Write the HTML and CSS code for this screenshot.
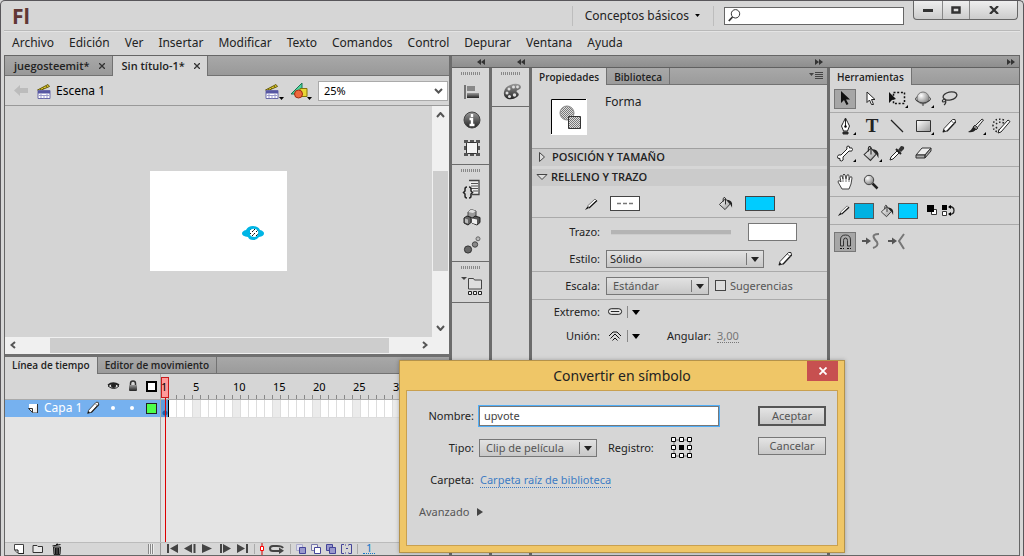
FILE: index.html
```html
<!DOCTYPE html>
<html lang="es">
<head>
<meta charset="utf-8">
<title>Fl</title>
<link rel="stylesheet" href="styles.css">
</head>
<body>
<svg class="defs" width="0" height="0" aria-hidden="true">
  <defs>
    <linearGradient id="gLight" x1="0" y1="0" x2="1" y2="1"><stop offset="0" stop-color="#fff"/><stop offset="1" stop-color="#999"/></linearGradient>
    <linearGradient id="gDark" x1="0" y1="0" x2="0" y2="1"><stop offset="0" stop-color="#999"/><stop offset="1" stop-color="#222"/></linearGradient>
    <radialGradient id="gBall" cx=".35" cy=".3" r=".8"><stop offset="0" stop-color="#fff"/><stop offset="1" stop-color="#777"/></radialGradient>
    <pattern id="dots" width="2" height="2" patternUnits="userSpaceOnUse"><rect width="2" height="2" fill="#ddd"/><rect width="1" height="1" fill="#777"/><rect x="1" y="1" width="1" height="1" fill="#777"/></pattern>
    <pattern id="dotsBlack" width="4" height="4" patternUnits="userSpaceOnUse"><rect width="4" height="4" fill="#fff"/><rect width="1" height="1" fill="#111"/><rect x="2" y="2" width="1" height="1" fill="#111"/><rect x="3" y="1" width="1" height="1" fill="#555"/></pattern>
    <symbol id="pencil" viewBox="0 0 16 16"><path d="M2 14 3 10.5 11.5 1.5 14 1.5 14.5 4 6 13z" fill="#fff" stroke="#333"/><path d="M1.500 14.500 3 11.500 4.500 13z" fill="#111"/><path d="M6 13.300 14.600 4" stroke="#222" stroke-width="1.300"/><path d="m10.500 3 3 3" stroke="#666"/></symbol>
    <symbol id="brushpen" viewBox="0 0 14 14"><path d="M3.500 9 11 2l1.500 1.500L5.500 10.500z" fill="#fff" stroke="#777"/><path d="M5 11 13 3.500" stroke="#111" stroke-width="1.200"/><path d="M1 13 3.500 9.500 5 11z" fill="#111"/></symbol>
    <symbol id="bucket" viewBox="0 0 16 16"><path d="M1.500 9 8 3l5 5.500-5.500 6z" fill="url(#gLight)" stroke="#333"/><path d="M8 9V2.500Q6.500 0 5.500 3v3" fill="none" stroke="#222"/><path d="M9 4q5 0 6 4v4.500l-2-4z" fill="#222"/></symbol>
    <symbol id="clap" viewBox="0 0 16 18"><path d="M1.500 8 12 2.500l1.500 2L3 9z" fill="#e4cf28" stroke="#665b10"/><path d="M4 7 5 8.500M7 5.500l1 1.500M10 4l1 1.500" stroke="#665b10"/><path d="M2 8.500h12v8H2z" fill="#fff" stroke="#6868a8"/><path d="M2 9h12v2.500H2z" fill="#5757a3"/><path d="M3 13.500h10M5 12v4M8 13.500v3M11 12v4" stroke="#9b9bcc"/></symbol>
    <symbol id="corner" viewBox="0 0 4 4"><path d="M4 0v4H0z"/></symbol>
    <symbol id="down" viewBox="0 0 8 5"><path d="M0 0h8L4 5z"/></symbol>
    <symbol id="chevs" viewBox="0 0 8 6"><path d="M4 0v6L0 3zM8 0v6L4 3z"/></symbol>
  </defs>
</svg>

<div class="app">
  <header class="titlebar">
    <div class="logo">Fl</div>
    <button class="workspace-switch">Conceptos básicos <svg width="5" height="3"><use href="#down"/></svg></button>
    <label class="search">
      <svg width="13" height="13" viewBox="0 0 13 13" fill="none" stroke="#333" aria-label="Buscar"><circle cx="7.500" cy="4.800" r="4.200"/><path d="M4.500 8 .8 12" stroke-width="1.800"/></svg>
      <input type="text" aria-label="Buscar">
    </label>
    <div class="window-buttons">
      <button aria-label="Minimizar"><svg width="10" height="3"><path d="M0 0h10v3H0z" fill="#333"/></svg></button>
      <button aria-label="Maximizar"><svg width="10" height="8"><path d="M1.500 1.500h7v5h-7z" fill="none" stroke="#333" stroke-width="2.500"/></svg></button>
      <button aria-label="Cerrar"><svg width="10" height="8" viewBox="0 0 10 8"><path d="m1 0 8 8M9 0 1 8" stroke="#333" stroke-width="2.200"/></svg></button>
    </div>
  </header>

  <nav class="menubar">
    <button>Archivo</button><button>Edición</button><button>Ver</button><button>Insertar</button><button>Modificar</button><button>Texto</button><button>Comandos</button><button>Control</button><button>Depurar</button><button>Ventana</button><button>Ayuda</button>
  </nav>

  <main class="workspace">
    <div class="documents">
      <section class="document">
        <div class="doc-tabs">
          <div class="doc-tab">juegosteemit* <button aria-label="Cerrar juegosteemit"><svg width="6" height="6" viewBox="0 0 6 6"><path d="m0 0 6 6M6 0 0 6" stroke="#333" stroke-width="1.300"/></svg></button></div>
          <div class="doc-tab active">Sin título-1* <button aria-label="Cerrar Sin título-1"><svg width="6" height="6" viewBox="0 0 6 6"><path d="m0 0 6 6M6 0 0 6" stroke="#333" stroke-width="1.300"/></svg></button></div>
        </div>
        <div class="scenebar">
          <button class="back" aria-label="Atrás"><svg width="14" height="11"><path d="M0 5.500 6 0v3h8v5H6v3z" fill="#bcbcbc"/></svg></button>
          <svg width="16" height="18"><use href="#clap"/></svg>
          <span class="scene-name">Escena 1</span>
          <button class="scene-btn" aria-label="Editar escena"><svg width="20" height="18" viewBox="0 0 20 18"><use href="#clap" width="16" height="18"/><path d="M15 15h5l-2.500 3z"/></svg></button>
          <button class="scene-btn" aria-label="Editar símbolos"><svg width="22" height="18" viewBox="0 0 22 18"><path d="M1 12 12 1v11z" fill="#4dd3a0" stroke="#187451"/><path d="M10 6.500h7v8h-7z" fill="#e9d735" stroke="#84750c"/><circle cx="8.500" cy="12" r="4" fill="#ee693d" stroke="#9c2f12"/><path d="M17 15h5l-2.500 3z"/></svg></button>
          <span class="zoom-select"><select aria-label="Zoom"><option>25%</option></select><svg width="9" height="6" viewBox="0 0 9 6"><path d="m1 1 3.500 3.500L8 1" fill="none" stroke="#555" stroke-width="2"/></svg></span>
        </div>
        <div class="canvas-area">
          <div class="pasteboard">
            <div class="stage">
              <svg class="shape" width="22" height="16" viewBox="0 0 22 16"><path d="M4 5Q6 1 11 1t7 4q4 1 4 3.500T17 12q-2 3-6 3t-5-3Q0 11 0 8.500T4 5z" fill="#00b5e5"/><path d="M8 5q5-3 8 1 1 5-3 6-5 0-5-3z" fill="url(#dotsBlack)"/></svg>
            </div>
          </div>
          <div class="vscroll">
            <svg width="9" height="6" viewBox="0 0 9 6"><path d="m1 5 3.500-4L8 5" fill="none" stroke="#555" stroke-width="2"/></svg>
            <i class="thumb"></i>
            <svg width="9" height="6" viewBox="0 0 9 6"><path d="m1 1 3.500 4L8 1" fill="none" stroke="#555" stroke-width="2"/></svg>
          </div>
          <div class="hscroll">
            <svg width="6" height="8" viewBox="0 0 6 8"><path d="M5 1 1.500 4 5 7" fill="none" stroke="#555" stroke-width="2"/></svg>
            <i class="thumb"></i>
            <svg width="6" height="8" viewBox="0 0 6 8"><path d="m1 1 3.500 3L1 7" fill="none" stroke="#555" stroke-width="2"/></svg>
          </div>
        </div>
      </section>

      <section class="timeline">
        <div class="tabs">
          <button class="tab active">Línea de tiempo</button><button class="tab">Editor de movimiento</button>
        </div>
        <div class="timeline-body">
          <div class="layers">
            <div class="layer-head">
              <svg width="13" height="10" viewBox="0 0 13 10"><path d="M1 5q5-5 11 0-5 5-11 0z" fill="#ddd" stroke="#222"/><circle cx="6.500" cy="4.500" r="2.500" fill="#222"/><path d="M1 4q5-4 11 0" fill="none" stroke="#222" stroke-width="1.600"/></svg>
              <svg width="10" height="12" viewBox="0 0 10 12"><path d="M2.500 6V3.500q0-2.500 2.500-2.500t2.500 2.500V6" fill="none" stroke="#333" stroke-width="1.500"/><rect x="1" y="5" width="8" height="6" rx="1" fill="url(#gDark)"/></svg>
              <svg width="11" height="11"><rect x="1" y="1" width="9" height="9" fill="#fff" stroke="#000" stroke-width="2"/></svg>
            </div>
            <div class="layer">
              <svg width="10" height="10" viewBox="0 0 10 10"><path d="M1 1h8.500v8.500H4.500L1 6z" fill="#fff"/><path d="M.5 5.500h4v4zM9.500 1v9h-5" fill="#eee" stroke="#333"/></svg>
              <span>Capa 1</span>
              <svg width="14" height="14"><use href="#pencil"/></svg>
              <i class="dot"></i><i class="dot"></i>
              <svg width="11" height="11"><rect x=".5" y=".5" width="10" height="10" fill="#4dff4d" stroke="#222"/></svg>
            </div>
          </div>
          <div class="frames">
            <div class="ruler"><span class="first">1</span><span>5</span><span>10</span><span>15</span><span>20</span><span>25</span><span>30</span></div>
            <div class="frame-row"><div class="keyframe"></div></div>
            <div class="playhead"></div>
          </div>
        </div>
        <div class="timeline-foot">
          <div class="layer-tools">
            <button aria-label="Nueva capa"><svg width="10" height="10" viewBox="0 0 10 10"><path d="M.5.500h9v9H4L.5 6z" fill="#fff" stroke="#444"/><path d="M1 6h3v3" fill="none" stroke="#111"/><path d="M5 9.500h5V2" fill="none" stroke="#222"/></svg></button>
            <button aria-label="Nueva carpeta"><svg width="12" height="9" viewBox="0 0 12 9"><path d="M1 1.500h4l1 1h4.500v6H1z" fill="#e8e8e8" stroke="#333"/></svg></button>
            <button aria-label="Eliminar"><svg width="10" height="12" viewBox="0 0 10 12"><path d="M1.500 4h7L8 11.500H2z" fill="#999" stroke="#222"/><path d="M3.500 5v6M5 5v6M6.500 5v6M.5 3l8-1.500M4 1.500 6 1" stroke="#111" stroke-width="1.200"/></svg></button>
            <i class="foot-grip"></i>
          </div>
          <div class="playback">
            <button aria-label="Primer fotograma"><svg width="12" height="9"><path d="M0 0h2v9H0zM11 0v9L3 4.500z"/></svg></button>
            <button aria-label="Fotograma anterior"><svg width="13" height="9"><path d="M8 0v9L0 4.500zM9.500 0h2v9h-2z"/></svg></button>
            <button aria-label="Reproducir"><svg width="12" height="9"><path d="M0 0v9l10-4.500z"/></svg></button>
            <button aria-label="Fotograma siguiente"><svg width="13" height="9"><path d="M1 0h2v9H1zM4 0v9l8-4.500z"/></svg></button>
            <button aria-label="Último fotograma"><svg width="12" height="9"><path d="M0 0v9l8-4.500zM9 0h2v9H9z"/></svg></button>
            <i class="rule"></i>
            <button aria-label="Centrar fotograma"><svg width="4" height="13"><path d="M2 0v13" stroke="#c00"/><path d="M.5 4.500h3v4h-3z" fill="#fff" stroke="#f00"/></svg></button>
            <button aria-label="Bucle"><svg width="16" height="10" viewBox="0 0 16 10"><path d="M14 4Q13 2 8 2H4Q1 2 1 4.500T4 7h6" fill="none" stroke="#444" stroke-width="2"/><path d="M10 3.500V10l5-3.300z"/></svg></button>
            <i class="rule"></i>
            <button aria-label="Papel cebolla"><svg width="10" height="10"><path d="M.5.500h6v6h-6z" fill="#dde" stroke="#aac"/><path d="M3.500 3.500h6v6h-6z" fill="#99c" stroke="#449"/></svg></button>
            <button aria-label="Contornos"><svg width="10" height="10"><path d="M.5.500h6v6h-6z" fill="#eee" stroke="#77a"/><path d="M3.500 3.500h6v6h-6z" fill="#fff" stroke="#449"/></svg></button>
            <button aria-label="Editar varios"><svg width="10" height="10"><path d="M.5.500h6v6h-6z" fill="#99c" stroke="#449"/><path d="M3.500 3.500h6v6h-6z" fill="#99c" stroke="#449"/></svg></button>
            <button aria-label="Marcadores"><svg width="11" height="10"><path d="M3 .5H.5v9H3M8 .5h2.500v9H8M5 4.500h2M4 1h1M7 1h1M4 9h1M7 9h1" fill="none" stroke="#449"/></svg></button>
            <i class="rule"></i>
            <a class="frame-number" href="#">1</a>
          </div>
        </div>
      </section>
    </div>

    <div class="docks">
      <div class="dock-head dock-grid">
        <button aria-label="Expandir"><svg width="8" height="6"><use href="#chevs"/></svg></button>
        <button aria-label="Expandir"><svg width="8" height="6"><use href="#chevs"/></svg></button>
        <button class="flip" aria-label="Contraer"><svg width="8" height="6"><use href="#chevs"/></svg></button>
        <button class="flip" aria-label="Contraer"><svg width="8" height="6"><use href="#chevs"/></svg></button>
      </div>
      <div class="dock-body dock-grid">
        <div class="icon-dock">
          <div class="dock-group">
            <i class="grip"></i>
            <button aria-label="Alinear"><svg width="16" height="16" viewBox="0 0 16 16"><path d="M1 1v14" stroke="#111"/><path d="M3 2h8v5H3z" fill="#888"/><path d="M3 9h12v5H3z" fill="url(#gDark)"/></svg></button>
            <button aria-label="Información"><svg width="18" height="18" viewBox="0 0 18 18"><circle cx="9" cy="9" r="8" fill="url(#gDark)" stroke="#444"/><path d="M9 3v3M6.500 8H9v6M6.500 14h5" fill="none" stroke="#fff" stroke-width="2.400"/></svg></button>
            <button aria-label="Transformar"><svg width="18" height="18" viewBox="0 0 18 18"><path d="M3.500 3.500h11v11h-11z" fill="#f4f4f4" stroke="#333"/><path d="M1 1h4v3H1zM7 1h4v2H7zM13 1h4v3h-4zM1 7h2v4H1zM15 7h2v4h-2zM1 14h4v3H1zM7 15h4v2H7zM13 14h4v3h-4z" fill="#555"/></svg></button>
          </div>
          <div class="dock-group">
            <i class="grip"></i>
            <button aria-label="Fragmentos de código"><svg width="20" height="20" viewBox="0 0 20 20"><path d="M7 1.500h10v14h-7" fill="#eee" stroke="#444" stroke-width="1.300"/><path d="M9 4.500h7M9 7h7M9 9.500h7M11 12h5" stroke="#555"/><path d="M5 8Q3 8 3 10v2l-1.500 1.500L3 15v2q0 2 2 2M7 8q2 0 2 2v2l1.500 1.500L9 15v2q0 2-2 2" fill="none" stroke="#222" stroke-width="1.500"/></svg></button>
            <button aria-label="Componentes"><svg width="18" height="18" viewBox="0 0 18 18"><path d="m5 4 3-2.500 5 1.500v5l-3 2-5-1.500z" fill="#999" stroke="#444"/><path d="m5 4 5 1 3-2-5-1.500z" fill="#ddd"/><path d="M1 10 4 8l4 1.500v5L5 17l-4-2z" fill="#666" stroke="#222"/><path d="M9 10.500 12 8l5 1.500v5L14 17l-5-2z" fill="#555" stroke="#222"/><path d="m9 10.500 5 1v5l-5-1.500z" fill="#eee"/><path d="m2 10.500 3 1v4l-3-1z" fill="#bbb"/></svg></button>
            <button aria-label="Configuración de movimiento"><svg width="18" height="18" viewBox="0 0 18 18"><circle cx="5" cy="13.500" r="3.600" fill="#666" stroke="#333"/><circle cx="12" cy="8.500" r="2.700" fill="#888" stroke="#444"/><circle cx="15" cy="2.800" r="2" fill="#bbb" stroke="#666"/></svg></button>
          </div>
          <div class="dock-group">
            <i class="grip"></i>
            <button aria-label="Proyecto"><svg width="22" height="20" viewBox="0 0 22 20"><path d="M0 1h6L3 4z" fill="#444"/><path d="M7.500 2.500h5l1 1.500h7v9h-13z" fill="#ddd" stroke="#444"/><path d="M7.500 15.500h3v3h-3zM12.500 15.500h3v3h-3zM17.500 15.500h3v3h-3z" fill="#eee" stroke="#222"/></svg></button>
          </div>
        </div>
        <div class="icon-dock">
          <div class="dock-group">
            <i class="grip"></i>
            <button aria-label="Muestras"><svg width="20" height="18" viewBox="0 0 20 18"><path d="M2 9Q3 3 11 1q7-1 8 3 0 2-3 3t0 3q2 2-1 4-4 3-9 2-5-2-4-7z" fill="url(#gDark)"/><g fill="#ddd"><circle cx="5" cy="10" r="1.500"/><circle cx="7" cy="6" r="1.500"/><circle cx="11.500" cy="4" r="1.500"/><circle cx="15.500" cy="4" r="1.400"/><circle cx="7.500" cy="13.500" r="1.500"/><circle cx="12.500" cy="12" r="1.700"/></g></svg></button>
          </div>
        </div>

        <section class="properties">
          <div class="tabs">
            <button class="tab active">Propiedades</button><button class="tab">Biblioteca</button>
            <button class="panel-menu" aria-label="Menú del panel"><svg width="14" height="8"><path d="M0 1h5L2.500 4z"/><path d="M6 .5h8M6 2.500h8M6 4.500h8M6 6.500h8" stroke="#444"/></svg></button>
          </div>
          <div class="object-kind">
            <svg width="36" height="36" viewBox="0 0 36 36"><path d="M0 0h36v36H0z" fill="#fff"/><path d="M.5 35V.5H35" fill="none" stroke="#000"/><circle cx="16" cy="14" r="7" fill="url(#dots)" stroke="#888"/><path d="M17.500 17.500h12v12h-12z" fill="url(#dots)" stroke="#333"/></svg>
            <span>Forma</span>
          </div>
          <button class="section-head"><svg width="9" height="12" viewBox="0 0 9 12"><path d="M1.500 1.500v9l5-4.500z" fill="#ddd" stroke="#444"/></svg>POSICIÓN Y TAMAÑO</button>
          <button class="section-head open"><svg width="12" height="8" viewBox="0 0 12 8"><path d="M1 1.500h10l-5 5z" fill="#ddd" stroke="#444"/></svg>RELLENO Y TRAZO</button>
          <div class="row paint">
            <svg width="14" height="14"><use href="#brushpen"/></svg>
            <button class="swatch dashed" aria-label="Color de trazo"><svg width="18" height="3"><path d="M1 1.500h4M7 1.500h4M13 1.500h4" stroke="#777" stroke-width="1.500"/></svg></button>
            <svg class="paint-bucket" width="15" height="15"><use href="#bucket"/></svg>
            <button class="swatch cyan" aria-label="Color de relleno"></button>
          </div>
          <div class="row stroke-row"><label for="stroke">Trazo:</label><div class="slider"></div><input id="stroke" type="text"></div>
          <div class="row style-row"><label for="style">Estilo:</label><span class="combo wide"><select id="style"><option>Sólido</option></select><svg width="8" height="5"><use href="#down"/></svg></span><button aria-label="Editar estilo"><svg width="16" height="16"><use href="#pencil"/></svg></button></div>
          <div class="row scale-row"><label for="scale">Escala:</label><span class="combo muted"><select id="scale"><option>Estándar</option></select><svg width="8" height="5"><use href="#down"/></svg></span><label class="hint"><input type="checkbox">Sugerencias</label></div>
          <div class="row cap-row"><span class="label">Extremo:</span><button class="mini" aria-label="Extremo"><svg width="16" height="8" viewBox="0 0 16 8"><rect x=".5" y=".5" width="14" height="6" rx="3" fill="#eee" stroke="#111"/><path d="M3 3.500h9" stroke="#111"/></svg><i></i><svg width="8" height="5"><use href="#down"/></svg></button></div>
          <div class="row join-row"><span class="label">Unión:</span><button class="mini" aria-label="Unión"><svg width="14" height="10" viewBox="0 0 14 10"><path d="m.5 5 4-4h4l4 4M2 7.500 6.500 3 11 7.500M4 9.500 6.500 7 9 9.500" fill="none" stroke="#111"/></svg><i></i><svg width="8" height="5"><use href="#down"/></svg></button><span class="miter">Angular:</span><a href="#" class="value">3,00</a></div>
        </section>

        <section class="tools">
          <div class="tabs"><button class="tab active">Herramientas</button></div>
          <div class="tool-row">
            <button class="on" aria-label="Selección"><svg width="10" height="15" viewBox="0 0 10 15"><path d="M1 0v12l3-3 2.500 5 2-1L6 8.500h4z" fill="#111"/></svg></button>
            <button aria-label="Subselección"><svg width="10" height="15" viewBox="0 0 10 15"><path d="M1 1v10.500l2.500-2.500 2 4.500h2L5.500 8.500H9z" fill="#fff" stroke="#222"/></svg></button>
            <button aria-label="Transformación libre"><svg width="18" height="15" viewBox="0 0 18 15"><path d="M5.500 1.500h11v11h-11z" fill="none" stroke="#111" stroke-width="1.500" stroke-dasharray="2 1.700"/><path d="M1 1v11l3-3 4-1z" fill="#111"/></svg><svg class="more" width="3" height="3"><use href="#corner"/></svg></button>
            <button aria-label="Rotación 3D"><svg width="17" height="17" viewBox="0 0 17 17"><ellipse cx="8" cy="9" rx="7.500" ry="3.500" fill="none" stroke="#444"/><circle cx="8" cy="8" r="6" fill="url(#gBall)" stroke="#777"/><path d="M8 13v3M1 10q7 6 14 0" fill="none" stroke="#444"/></svg><svg class="more" width="3" height="3"><use href="#corner"/></svg></button>
            <button aria-label="Lazo"><svg width="17" height="15" viewBox="0 0 17 15"><ellipse cx="9" cy="5" rx="7" ry="4" transform="rotate(-12 9 5)" fill="none" stroke="#333" stroke-width="1.300"/><path d="M4 8Q0 9 2 11q4 0 2-3 2 4-1 6" fill="none" stroke="#333" stroke-width="1.200"/></svg></button>
          </div>
          <div class="tool-row">
            <button aria-label="Pluma"><svg width="13" height="18" viewBox="0 0 13 18"><path d="M6.500 1Q4 6 2.500 9l2 5h4l2-5Q9 6 6.500 1z" fill="#fff" stroke="#222"/><path d="M6.500 2v7M4 15h5v2H4z" fill="#333" stroke="#222"/><circle cx="6.500" cy="9.500" r="1.200"/></svg><svg class="more" width="3" height="3"><use href="#corner"/></svg></button>
            <button class="type-tool" aria-label="Texto">T</button>
            <button aria-label="Línea"><svg width="14" height="14"><path d="m1 1 12 12" stroke="#222" stroke-width="1.300"/></svg></button>
            <button aria-label="Rectángulo"><svg width="15" height="12"><path d="M.5.500h14v11H.5z" fill="url(#gLight)" stroke="#333"/></svg><svg class="more" width="3" height="3"><use href="#corner"/></svg></button>
            <button aria-label="Lápiz"><svg width="16" height="16"><use href="#pencil"/></svg></button>
            <button aria-label="Pincel"><svg width="17" height="16" viewBox="0 0 17 16"><path d="m8 8 7-7 1.500 1L10 10z" fill="#eee" stroke="#333"/><path d="m6 9 2-2 3 3-2 2z" fill="#888" stroke="#333"/><path d="M1 14q3-1 5-5l3 2q-2 4-8 3z" fill="#222"/></svg><svg class="more" width="3" height="3"><use href="#corner"/></svg></button>
            <button aria-label="Deco"><svg width="19" height="16" viewBox="0 0 19 16"><path d="m7 12 9-10 2 1.500L9 14l-3 1z" fill="#fff" stroke="#222"/><path d="M12 2Q2-1 1 7q0 6 5 7M4 6q3-3 8-1M4 9q2 3 3 3" fill="none" stroke="#222" stroke-width="1.500" stroke-dasharray="1.500 2"/></svg></button>
          </div>
          <div class="tool-row">
            <button aria-label="Hueso"><svg width="16" height="17" viewBox="0 0 16 17"><path d="m4 10 6-6q-1-3 1-3t1.500 2q3-1 3 1.500T12 6l-6 6q1 4-1.500 4T3 13.500Q0 14 .5 11.500T4 10z" fill="#fff" stroke="#222"/></svg><svg class="more" width="3" height="3"><use href="#corner"/></svg></button>
            <button aria-label="Cubo de pintura"><svg width="18" height="17"><use href="#bucket"/></svg><svg class="more" width="3" height="3"><use href="#corner"/></svg></button>
            <button aria-label="Cuentagotas"><svg width="16" height="16" viewBox="0 0 16 16"><path d="m1 15 1-3 6-6 2 2-6 6z" fill="#fff" stroke="#222"/><path d="m7 4 5 5" stroke="#222" stroke-width="2"/><path d="m9 5 3-4q4 0 3 3l-3 3z" fill="#333"/></svg></button>
            <button aria-label="Borrador"><svg width="17" height="12" viewBox="0 0 17 12"><path d="m1 8 6-7h9l-6 7z" fill="#eee" stroke="#333"/><path d="M1 8h9v3H1zM10 8l6-7v3l-6 7z" fill="#aaa" stroke="#333"/></svg></button>
          </div>
          <div class="tool-row">
            <button aria-label="Mano"><svg width="17" height="17" viewBox="0 0 17 17"><path d="M5 16 1 9q0-2 2-1l1 1-1-5q0-2 2-1l1 3V2q1-2 2 0l1 4 1-4q2-1 2 1v4l1-3q2-1 2 1l-1 6-2 5z" fill="#fff" stroke="#444"/><path d="M6 6v3M9 6v3M12 7v2" stroke="#777"/></svg></button>
            <button aria-label="Zoom"><svg width="16" height="16" viewBox="0 0 16 16"><circle cx="6" cy="6" r="4.700" fill="url(#gBall)" stroke="#444"/><path d="m9.500 9.500 5 5" stroke="#222" stroke-width="2.500"/></svg></button>
          </div>
          <div class="tool-row colors">
            <svg width="13" height="13"><use href="#brushpen"/></svg>
            <button class="color stroke-color" aria-label="Trazo"></button>
            <svg width="14" height="14"><use href="#bucket"/></svg>
            <button class="color fill-color" aria-label="Relleno"></button>
            <button aria-label="Blanco y negro"><svg width="11" height="11"><path d="M4.500 4.500h5v5h-5z" fill="#fff" stroke="#333"/><path d="M0 0h7v7H0z"/></svg></button>
            <button aria-label="Intercambiar colores"><svg width="13" height="12" viewBox="0 0 13 12"><path d="M0 0h5v5H0z"/><path d="M.5 6.500h4v4h-4z" fill="#fff" stroke="#333"/><path d="M7 1.500q5 0 5 4t-5 4" fill="none" stroke="#222" stroke-width="1.300"/><path d="M9 0v4L6 2zM9 7v4L6 9z"/></svg></button>
          </div>
          <div class="tool-row last">
            <button class="on" aria-label="Ajustar a objetos"><svg width="13" height="16" viewBox="0 0 13 16"><path d="M1.500 12V6q0-5 5-5t5 5v6h-3V6.500Q8.500 4 6.500 4t-2 2.500V12z" fill="#aaa" stroke="#333"/><path d="M1 14.500h2M4 14.500h1M8 14.500h2M11 14.500h1" stroke="#111"/></svg></button>
            <button aria-label="Suavizar"><svg width="18" height="17" viewBox="0 0 18 17"><path d="M0 8h6" stroke="#555" stroke-width="2"/><path d="M4 4.500v7L9 8z" fill="#555"/><path d="M17 1q-7 0-5 4 1 2 3 4 2 4-4 6" fill="none" stroke="#777" stroke-width="2"/></svg></button>
            <button aria-label="Enderezar"><svg width="18" height="17" viewBox="0 0 18 17"><path d="M0 8h6" stroke="#555" stroke-width="2"/><path d="M4 4.500v7L9 8z" fill="#555"/><path d="m16 1-5 7 5 8" fill="none" stroke="#777" stroke-width="2"/></svg></button>
          </div>
        </section>
      </div>
    </div>
  </main>

  <form class="dialog" role="dialog" aria-labelledby="dialog-title">
    <div class="dialog-head">
      <h1 id="dialog-title">Convertir en símbolo</h1>
      <button type="button" class="dialog-close" aria-label="Cerrar diálogo"><svg width="8" height="8"><path d="m.5.500 7 7M7.500.500l-7 7" stroke="#fff" stroke-width="1.800"/></svg></button>
    </div>
    <div class="dialog-body">
      <label for="name">Nombre:</label>
      <input id="name" class="name" type="text" value="upvote">
      <button type="button" class="push default">Aceptar</button>
      <label for="kind">Tipo:</label>
      <div class="kind">
        <span class="combo muted"><select id="kind"><option>Clip de película</option></select><svg width="8" height="5"><use href="#down"/></svg></span>
        <span class="reg-label">Registro:</span>
        <button type="button" aria-label="Punto de registro"><svg width="22" height="22" viewBox="0 0 22 22"><path d="M3 3h16v16H3z" fill="none" stroke="#777"/><g fill="#fff" stroke="#000"><path d="M.5.500h4v4h-4zM8.500.500h4v4h-4zM16.500.500h4v4h-4zM.5 8.500h4v4h-4zM16.500 8.500h4v4h-4zM.5 16.500h4v4h-4zM8.500 16.500h4v4h-4zM16.500 16.500h4v4h-4z"/></g><path d="M8 8h5v5H8z"/></svg></button>
      </div>
      <button type="button" class="push cancel">Cancelar</button>
      <span class="label">Carpeta:</span>
      <div><a class="folder" href="#">Carpeta raíz de biblioteca</a></div>
      <span></span>
      <button type="button" class="advanced">Avanzado <svg width="6" height="8"><path d="M0 0v8l6-4z"/></svg></button>
    </div>
  </form>
</div>
</body>
</html>
```
FILE: styles.css
```css
* { box-sizing: border-box; }
body { margin: 0; font: 11px/14px "Noto Sans", "Open Sans", sans-serif; color: #222; background: #d6d6d6; }
button, input, select { font: inherit; color: inherit; margin: 0; padding: 0; border: 0; background: none; border-radius: 0; }
button { display: flex; align-items: center; justify-content: center; }
svg { display: block; flex: none; }
a { text-decoration: none; }
.defs { position: absolute; }

.app { position: relative; height: 100vh; min-height: 500px; display: flex; flex-direction: column; padding: 0 3px; border: 1px solid #58565a; border-bottom: 0; border-radius: 5px 5px 0 0; overflow: hidden; background: #d6d6d6; }

.titlebar { height: 30px; display: flex; align-items: center; border-bottom: 1px solid #b9b9b9; }
.logo { flex: 1; padding-left: 8px; font: bold 21px/28px "Open Sans", "Noto Sans", sans-serif; color: #613735; }
.workspace-switch { height: 20px; padding: 0 13px 0 12px; gap: 6px; border: solid #bdbdbd; border-width: 0 1px; font-size: 12px; }
.search { display: flex; align-items: center; width: 180px; height: 18px; margin: 0 9px 0 10px; padding-left: 3px; background: #fff; border: 1px solid #666; }
.search input { flex: 1; min-width: 0; outline: 0; }
.window-buttons { align-self: flex-start; display: grid; grid-template-columns: 28px 27px 48px; height: 19px; margin-right: 2px; border: solid #666; border-width: 0 1px 1px; border-radius: 0 0 4px 4px; background: linear-gradient(#eee, #ccc); }
.window-buttons button + button { border-left: 1px solid #888; }

.menubar { height: 24px; display: flex; align-items: center; gap: 15px; padding: 0 8px 2px; font-size: 12px; border-top: 1px solid #e4e4e4; }

.workspace { flex: 1; min-height: 0; display: flex; border: 1px solid #666; }
.documents { flex: 1; min-width: 0; display: grid; grid-template-rows: minmax(0, 3fr) minmax(0, 2fr); gap: 3px; background: #707070; border-right: 3px solid #6c6c6c; }
.document, .timeline { min-width: 0; display: flex; flex-direction: column; background: #d6d6d6; }

.doc-tabs { display: flex; height: 20px; background: linear-gradient(#a8a8a8, #999); border-bottom: 1px solid #727272; }
.doc-tab { display: flex; align-items: center; gap: 9px; height: 20px; padding: 0 7px 0 9px; font: 600 11px/14px "Open Sans", "Noto Sans", sans-serif; border-right: 1px solid #727272; }
.doc-tab.active { background: #d6d6d6; }

.scenebar { display: flex; align-items: center; height: 30px; padding-right: 1px; border-bottom: 1px solid #999; }
.back { width: 31px; }
.scene-name { flex: 1; padding-left: 4px; font-size: 12px; color: #000; }
.scene-btn { margin-right: 6px; }
.zoom-select { display: grid; align-items: center; width: 130px; height: 20px; background: #fff; border: 1px solid #aaa; }
.zoom-select select { grid-area: 1 / 1; appearance: none; padding-left: 5px; color: #000; outline: 0; }
.zoom-select svg { grid-area: 1 / 1; justify-self: end; margin-right: 4px; pointer-events: none; }

.canvas-area { flex: 1; min-height: 0; display: grid; grid-template: minmax(0, 1fr) 17px / 1fr 17px; }
.pasteboard { display: grid; place-items: center; background: #d4d4d4; }
.stage { position: relative; width: 137px; height: 100px; background: #fff; }
.shape { position: absolute; left: 92px; top: 54px; }
.vscroll, .hscroll { display: flex; align-items: center; justify-content: space-between; background: #f0f0f0; }
.vscroll { flex-direction: column; padding: 6px 0; }
.vscroll .thumb { width: 15px; height: 100px; background: #cdcdcd; }
.hscroll { grid-column: 1 / 3; padding: 0 21px 0 5px; }
.hscroll .thumb { width: 338px; height: 15px; background: #cdcdcd; margin: 0 33px 0 34px; flex: 1; }

.tabs { display: flex; height: 17px; background: linear-gradient(#a8a8a8, #9b9b9b); border-bottom: 1px solid #727272; }
.tab { height: 17px; padding: 0 7px; font: 600 10px/14px "Open Sans", "Noto Sans", sans-serif; white-space: nowrap; border-right: 1px solid #727272; }
.tab.active { background: #d6d6d6; }

.timeline-body { flex: 1; min-height: 0; display: grid; grid-template-columns: 156px 1fr; background: #e4e4e4; }
.layers { border-right: 1px solid #aaa; }
.layer-head { display: flex; align-items: center; justify-content: flex-end; gap: 8px; height: 26px; padding: 0 3px 0 0; background: #d6d6d6; border-bottom: 1px solid #aaa; }
.layer { display: grid; grid-template-columns: 16px 42px 25px 19px 16px 11px; align-items: center; height: 17px; padding-left: 23px; background: #76b1ef; color: #fff; font-size: 12px; }
.dot { width: 4px; height: 4px; border-radius: 2px; background: #fff; }
.frames { position: relative; overflow: hidden; }
.ruler { display: flex; height: 26px; padding-top: 6px; color: #000; font-size: 11px; background: repeating-linear-gradient(90deg, transparent 0 7px, #888 7px 8px) 0 21px / 100% 4px no-repeat, #d6d6d6; border-bottom: 1px solid #aaa; }
.ruler span { flex: none; width: 40px; }
.ruler .first { position: relative; z-index: 1; width: 32px; }
.frame-row { height: 18px; border-bottom: 1px solid #ddd; background: repeating-linear-gradient(90deg, transparent 0 7px, #ddd 7px 8px), repeating-linear-gradient(90deg, #fff 0 32px, #ebebeb 32px 40px); }
.keyframe { width: 8px; height: 17px; background: radial-gradient(circle at 4px 13px, #1d5fa8 2px, transparent 3px), #5d9bdc; border-right: 1px solid #000; }
.playhead { position: absolute; left: 0; top: 3px; width: 8px; height: 21px; border: 1px solid #c81b1b; background: #ff9a9a; }
.playhead::after { content: ""; position: absolute; left: 3px; top: 20px; width: 1px; height: 100vh; background: #d00; }
.timeline-foot { display: grid; grid-template-columns: 156px 1fr; height: 13px; border-top: 1px solid #bbb; }
.layer-tools { display: flex; align-items: center; gap: 8px; padding: 0 6px 0 9px; border-right: 1px solid #999; }
.foot-grip { margin-left: auto; width: 6px; height: 10px; background: repeating-linear-gradient(90deg, #888 0 1px, #eee 1px 2px); }
.playback { display: flex; align-items: center; gap: 5px; padding-left: 6px; fill: #444; overflow: hidden; }
.rule { width: 1px; height: 10px; background: #aaa; }
.frame-number { padding: 0 3px; color: #1478c8; border-bottom: 1px dotted #1478c8; line-height: 10px; }

.docks { display: flex; flex-direction: column; background: #6c6c6c; }
.dock-grid { display: grid; grid-template-columns: 37px 37px 295px 189px; gap: 3px; }
.dock-head { height: 12px; background: linear-gradient(#9f9f9f, #8e8e8e); border-bottom: 1px solid #606060; }
.dock-head button { justify-content: flex-end; padding-right: 4px; fill: #333; }
.dock-head .flip svg { transform: rotate(180deg); }
.dock-body { flex: 1; min-height: 0; }
.icon-dock, .properties, .tools { background: #d6d6d6; }

.dock-group { display: flex; flex-direction: column; align-items: center; border-bottom: 1px solid #6c6c6c; padding-top: 4px; }
.dock-group button { height: 28px; padding-left: 3px; }
.icon-dock:first-child .dock-group { padding-bottom: 2px; }
.grip { width: 20px; height: 3px; margin-bottom: 3px; background: repeating-linear-gradient(90deg, #888 0 1px, #d6d6d6 1px 2px); }

.panel-menu { margin: 0 4px 0 auto; fill: #444; }
.object-kind { display: flex; gap: 18px; height: 64px; padding: 14px 0 0 19px; font-size: 12px; border-bottom: 1px solid #a0a0a0; }
.object-kind span { margin-top: -4px; }
.section-head { width: 100%; height: 17px; justify-content: flex-start; gap: 4px; padding: 0 0 2px 5px; margin-bottom: 3px; background: #cbcbcb; font: 600 11px/14px "Open Sans", "Noto Sans", sans-serif; }
.section-head svg { margin: 0 1px; }
.section-head.open { margin: 0; }
.section-head.open svg { margin: 0 -1px; }
.row { display: flex; align-items: center; }
.row > label:first-child, .row > .label { width: 68px; text-align: right; padding-right: 0; }
.row > :nth-child(2) { margin-left: 6px; }
.paint { height: 32px; padding: 4px 0 0 52px; border-bottom: 1px solid #aaa; }
.swatch { width: 30px; height: 15px; border: 1px solid #444; background: #fff; }
.paint .swatch.dashed { margin-left: 12px; }
.paint-bucket { margin: 0 12px 0 78px; }
.cyan { background: #0cf; }
.stroke-row { height: 28px; }
.stroke-row > .slider { flex: 1; height: 5px; margin: 0 17px 0 11px; background: #b4b4b4; border-bottom: 1px solid #ccc; }
.stroke-row input { width: 49px; height: 18px; margin-right: 30px; background: #fff; border: 1px solid #777; outline: 0; }
.style-row { height: 26px; border-bottom: 1px solid #aaa; }
.style-row button { margin-left: 13px; }
.combo { display: grid; align-items: center; height: 18px; width: 103px; border: 1px solid #777; background: linear-gradient(#e2e2e2, #c8c8c8); }
.combo.wide { width: 158px; }
.combo select { grid-area: 1 / 1; appearance: none; padding-left: 3px; outline: 0; width: 100%; }
.combo.muted select { padding-left: 6px; color: #555; }
.combo svg { grid-area: 1 / 1; justify-self: end; width: 17px; height: 12px; padding: 4px 4px 3px; border-left: 1px solid #777; pointer-events: none; fill: #222; }
.scale-row { height: 28px; border-bottom: 1px solid #aaa; }
.hint { display: flex; align-items: center; gap: 4px; margin-left: 6px; color: #555; }
.hint input { appearance: none; width: 11px; height: 11px; border: 1px solid #444; background: #ddd; }
.cap-row { height: 24px; }
.join-row { height: 24px; }
.row > .mini { gap: 4px; margin-left: 8px; }
.mini svg:first-child { width: 15px; }
.mini i { width: 1px; height: 12px; background: #888; }
.miter { margin: 0 6px 0 27px; }
.value { color: #777; border-bottom: 1px dotted #777; line-height: 13px; }

.tool-row { display: grid; grid-template-columns: repeat(7, 26px); align-items: center; height: 27px; padding-left: 3px; border-bottom: 1px solid #aaa; }
.tool-row button { position: relative; height: 20px; width: 22px; margin-left: 1px; }
.tool-row .on { background: #a6a6a6; border: 1px solid #777; }
.more { position: absolute; right: 0; bottom: 1px; }
.tool-row .type-tool { width: 24px; font: bold 19px/20px "Liberation Serif", serif; }
.tools .tabs + .tool-row { height: 28px; }
.tool-row:nth-child(5) { height: 30px; }
.tool-row.colors { grid-template-columns: 17px 26px 18px 27px 16px 16px; height: 28px; padding-left: 7px; }
.colors .color { width: 20px; height: 16px; margin: 0; border: 1px solid #555; }
.colors button { width: 14px; margin: 0; }
.stroke-color { background: #00b1e1; }
.fill-color { background: #0cf; }
.tool-row.last { height: 33px; border: 0; }

.dialog { position: absolute; left: 398px; top: 359px; width: 446px; padding: 0 6px 6px; border: 1px solid #b4924a; background: #efc667; box-shadow: 0 0 4px #0004; }
.dialog-head { display: grid; grid-template-columns: 31px 1fr 31px; height: 29px; }
h1 { grid-column: 2; margin: 0; text-align: center; font: 14px/30px "Noto Sans", sans-serif; }
.dialog-close { width: 31px; height: 20px; background: #c75050; }
.dialog-body { display: grid; grid-template-columns: 67px 1fr 68px; grid-template-rows: 34px 30px 34px 30px; align-items: center; column-gap: 5px; height: 156px; padding: 8px 11px 0 0; border: 1px solid #c9a04f; background: #d6d6d6; }
.dialog-body > label, .dialog-body > .label { text-align: right; }
.name { width: 240px; height: 20px; padding: 0 4px 2px; color: #444; background: #fff; border: 1px solid #777; outline: 1px solid #50aef8; }
.kind { display: flex; align-items: center; }
.kind .combo { width: 118px; }
.reg-label { width: 63px; margin-left: 11px; }
.push { height: 18px; color: #555; border: 1px solid #777; background: linear-gradient(#e4e4e4, #c8c8c8); }
.push.default { height: 20px; border: 2px solid #555; }
.push.cancel { margin-bottom: 4px; }
.folder { margin-left: 1px; color: #3f7dc4; border-bottom: 1px dotted #3f7dc4; }
.advanced { grid-column: 1 / 3; justify-self: start; gap: 8px; padding-left: 12px; color: #555; fill: #444; }
```
